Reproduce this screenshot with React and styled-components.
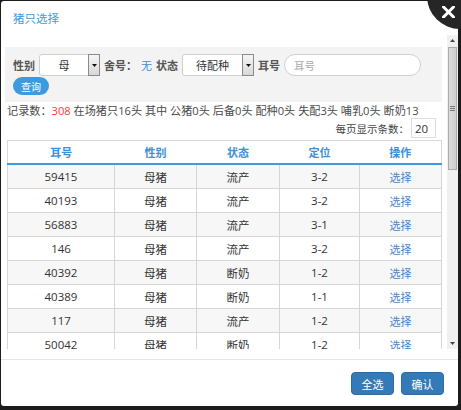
import styled, { createGlobalStyle } from "styled-components";

const GlobalStyle = createGlobalStyle`
  html, body {
    margin: 0;
    padding: 0;
    background: #1c1c1c;
    overflow: hidden;
  }
  body {
    font-family: "Open Sans", "Noto Sans CJK SC", sans-serif;
    font-size: 11px;
    color: #333;
  }
`;

const pigs = [
    { ear: "59415", sex: "母猪", state: "流产", pos: "3-2" },
    { ear: "40193", sex: "母猪", state: "流产", pos: "3-2" },
    { ear: "56883", sex: "母猪", state: "流产", pos: "3-1" },
    { ear: "146", sex: "母猪", state: "流产", pos: "3-2" },
    { ear: "40392", sex: "母猪", state: "断奶", pos: "1-2" },
    { ear: "40389", sex: "母猪", state: "断奶", pos: "1-1" },
    { ear: "117", sex: "母猪", state: "流产", pos: "1-2" },
    { ear: "50042", sex: "母猪", state: "断奶", pos: "1-2" },
];

const colWidths = [107, 82, 83, 80, 82];

function FakeSelect({ value, width }) {
    return (
        <SelectBox $width={width}>
            <SelectText>{value}</SelectText>
            <SelectArrow>
                <svg width="5" height="3" viewBox="0 0 5 3">
                    <path d="M0 0H5L2.5 3Z" fill="#111"/>
                </svg>
            </SelectArrow>
        </SelectBox>
    );
}

export default function App() {
    return (
        <>
            <GlobalStyle/>
            <Dialog>
                {/* 标题 */}
                <Header>
                    <Title>猪只选择</Title>
                </Header>

                {/* 关闭按钮 */}
                <CloseBtn>
                    <svg width="13" height="12" viewBox="0 0 13 12">
                        <path d="M1.5 1L11.5 11M11.5 1L1.5 11" stroke="#fff" strokeWidth="3" strokeLinecap="square"/>
                    </svg>
                </CloseBtn>

                {/* 内容 + 滚动条 */}
                <Body>
                    <Content>
                        <FilterPanel>
                            <Label>性别</Label>
                            <FakeSelect value="母" width={61}/>
                            <Label>舍号：</Label>
                            <Value>无</Value>
                            <Label>状态</Label>
                            <FakeSelect value="待配种" width={72}/>
                            <Label>耳号</Label>
                            <EarInput placeholder="耳号"/>
                            <QueryBtn>查询</QueryBtn>
                        </FilterPanel>

                        <Summary>
                            记录数：<Red>308</Red> 在场猪只16头 其中 公猪0头 后备0头 配种0头 失配3头 哺乳0头 断奶13
                        </Summary>

                        <PageSizeRow>
                            每页显示条数：
                            <PageSizeInput defaultValue="20"/>
                        </PageSizeRow>

                        <Table>
                            <colgroup>
                                {colWidths.map((w, i) => <col key={i} style={{ width: w }}/>)}
                            </colgroup>
                            <thead>
                                <tr>
                                    <Th>耳号</Th>
                                    <Th>性别</Th>
                                    <Th>状态</Th>
                                    <Th>定位</Th>
                                    <Th>操作</Th>
                                </tr>
                            </thead>
                            <tbody>
                                {pigs.map((p, i) => (
                                    <Tr key={i} $striped={i % 2 === 0}>
                                        <Td>{p.ear}</Td>
                                        <Td>{p.sex}</Td>
                                        <Td>{p.state}</Td>
                                        <Td>{p.pos}</Td>
                                        <Td><Pick>选择</Pick></Td>
                                    </Tr>
                                ))}
                            </tbody>
                        </Table>
                    </Content>

                    <ScrollBar>
                        <ScrollBtn>
                            <svg width="5" height="3" viewBox="0 0 5 3"><path d="M0 3H5L2.5 0Z" fill="#444"/></svg>
                        </ScrollBtn>
                        <Track>
                            <Thumb>
                                <Grip/>
                            </Thumb>
                        </Track>
                        <ScrollBtn>
                            <svg width="5" height="3" viewBox="0 0 5 3"><path d="M0 0H5L2.5 3Z" fill="#444"/></svg>
                        </ScrollBtn>
                    </ScrollBar>
                </Body>

                {/* 底部按钮 */}
                <Footer>
                    <FooterBtn>全选</FooterBtn>
                    <FooterBtn>确认</FooterBtn>
                </Footer>
            </Dialog>
        </>
    );
}

const Dialog = styled.div`
    position: relative;
    margin: 1px 0 0 1px;
    width: 457px;
    height: 405px;
    background: #fff;
    border-radius: 3px;
    display: flex;
    flex-direction: column;
`;

const Header = styled.div`
    height: 34px;
    flex: none;
    display: flex;
    align-items: center;
    padding-left: 12px;
`;

const Title = styled.span`
    font-family: "Noto Sans CJK SC", sans-serif;
    font-size: 11.5px;
    color: #3d9be0;
`;

const CloseBtn = styled.div`
    position: absolute;
    left: 426px;
    top: -38px;
    width: 66px;
    height: 66px;
    border-radius: 50%;
    background: #262626;
    box-sizing: border-box;
    padding: 43px 0 0 15px;
    cursor: pointer;
`;

const Body = styled.div`
    height: 314px;
    flex: none;
    display: flex;
`;

const Content = styled.div`
    flex: 1;
    overflow: hidden;
    padding: 12px 5px 0 4px;
`;

const FilterPanel = styled.div`
    background: #f3f3f3;
    padding: 7px 8px;
    display: flex;
    flex-wrap: wrap;
    align-items: center;
    column-gap: 4px;
    row-gap: 1px;
`;

const Label = styled.span`
    font-family: "Noto Sans CJK SC", sans-serif;
    font-weight: bold;
    color: #555;
    font-size: 11px;
`;

const Value = styled.span`
    font-family: "Noto Sans CJK SC", sans-serif;
    color: #3d8fd6;
    font-size: 11px;
`;

const SelectBox = styled.div`
    width: ${p => p.$width}px;
    height: 22px;
    box-sizing: border-box;
    display: flex;
    background: #fff;
    border: 1px solid #d0d0d0;
    border-radius: 3px 0 0 3px;
`;

const SelectText = styled.span`
    flex: 1;
    display: flex;
    align-items: center;
    justify-content: center;
    font-family: "Noto Sans CJK SC", sans-serif;
    font-size: 11px;
    color: #333;
`;

const SelectArrow = styled.span`
    width: 12px;
    margin: -1px -1px -1px 0;
    box-sizing: border-box;
    border: 1px solid #8a8a8a;
    background: linear-gradient(#f6f6f6, #d8d8d8);
    display: flex;
    align-items: center;
    justify-content: center;
`;

const EarInput = styled.input`
    width: 137px;
    height: 22px;
    box-sizing: border-box;
    border: 1px solid #d0d0d0;
    border-radius: 11px;
    padding: 0 9px;
    font-family: "Noto Sans CJK SC", sans-serif;
    font-size: 10.5px;
    outline: none;
    &::placeholder {
        color: #aaa;
    }
`;

const QueryBtn = styled.button`
    width: 36px;
    height: 18px;
    padding: 0;
    border: none;
    border-radius: 9px;
    background: #3d9ae0;
    color: #fff;
    font-family: "Noto Sans CJK SC", sans-serif;
    font-size: 10px;
`;

const Summary = styled.div`
    margin: 2px 0 0 2px;
    height: 14px;
    line-height: 14px;
    white-space: nowrap;
    color: #4a4a4a;
    font-size: 11.15px;
`;

const Red = styled.span`
    color: #f03c3c;
`;

const PageSizeRow = styled.div`
    display: flex;
    justify-content: flex-end;
    align-items: center;
    gap: 2px;
    margin: 0 6px 0 0;
    height: 20px;
    font-family: "Noto Sans CJK SC", sans-serif;
    color: #444;
    font-size: 10.5px;
`;

const PageSizeInput = styled.input`
    width: 25px;
    height: 20px;
    box-sizing: border-box;
    border: 1px solid #dcdcdc;
    padding: 0 3px;
    font-family: "Open Sans", sans-serif;
    font-size: 11.5px;
    color: #333;
    outline: none;
`;

const Table = styled.table`
    margin: 2px 0 0 2px;
    width: 434px;
    table-layout: fixed;
    border-collapse: collapse;
    border: 1px solid #dadada;
`;

const Th = styled.th`
    height: 22px;
    padding: 0;
    border-bottom: 2px solid #3d9be0;
    font-family: "Noto Sans CJK SC", sans-serif;
    font-weight: 600;
    font-size: 11px;
    color: #3d8fd6;
    text-align: center;
    background: #fff;
`;

const Tr = styled.tr`
    background: ${p => (p.$striped ? "#f7f7f7" : "#fff")};
`;

const Td = styled.td`
    height: 23px;
    padding: 0;
    border: 1px solid #d6d6d6;
    text-align: center;
    font-size: 11.5px;
    color: #333;
`;

const Pick = styled.a`
    color: #4a86c8;
    font-size: 11px;
    cursor: pointer;
`;

const ScrollBar = styled.div`
    width: 11px;
    flex: none;
    background: #f0f0f0;
    display: flex;
    flex-direction: column;
`;

const ScrollBtn = styled.div`
    height: 11px;
    flex: none;
    display: flex;
    align-items: center;
    justify-content: center;
`;

const Track = styled.div`
    flex: 1;
    padding-top: 1px;
`;

const Thumb = styled.div`
    margin: 0 1px;
    height: 123px;
    box-sizing: border-box;
    background: linear-gradient(90deg, #dcdcdc, #cfcfcf);
    border: 1px solid #ababab;
    display: flex;
    align-items: center;
    justify-content: center;
`;

const Grip = styled.div`
    width: 5px;
    height: 5px;
    background: repeating-linear-gradient(#777 0 1px, transparent 1px 2px);
`;

const Footer = styled.div`
    margin-top: 10px;
    border-top: 1px solid #e6e6e6;
    flex: 1;
    display: flex;
    justify-content: flex-end;
    align-items: flex-start;
    gap: 7px;
    padding: 12px 14px 0 0;
`;

const FooterBtn = styled.button`
    width: 43px;
    height: 23px;
    padding: 0;
    border: 1px solid #2e6da4;
    border-radius: 4px;
    background: #357ab8;
    color: #fff;
    font-family: "Noto Sans CJK SC", sans-serif;
    font-size: 11px;
`;
